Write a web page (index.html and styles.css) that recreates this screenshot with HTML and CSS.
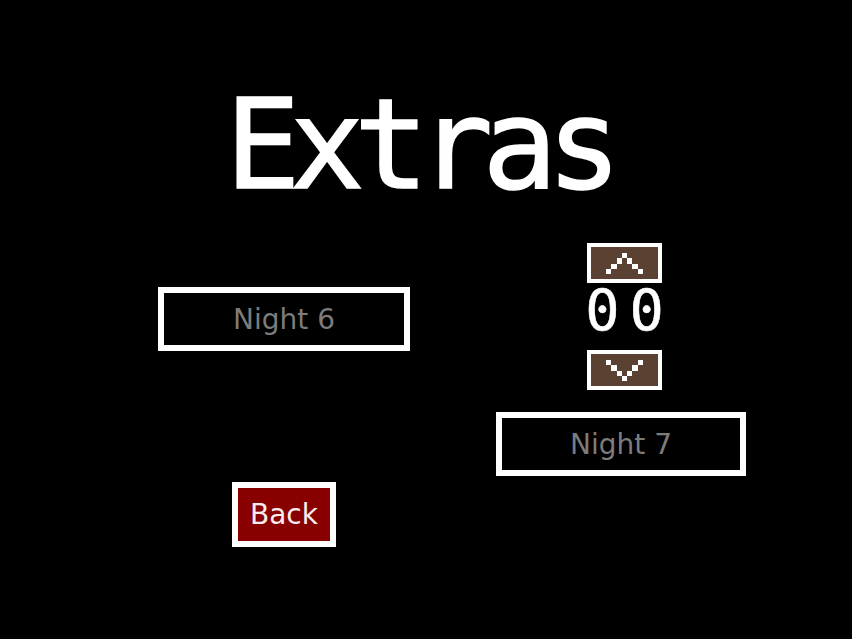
FILE: index.html
```html
<html>
<head>
  <meta charset="UTF-8">
  <meta name="viewport" content="width=device-width, initial-scale=1">
  <title>Extras</title>
  <link rel="stylesheet" href="styles.css">
</head>
<body>
  <div class="screen">
    <h1 class="title">Extras</h1>

    <div class="panel">
      <!-- left side: night 6 + back -->
      <div class="col col-left">
        <button class="night">Night 6</button>
        <button class="back">Back</button>
      </div>

      <!-- right side: custom night counter + night 7 -->
      <div class="col col-right">
        <div class="counter">
          <button class="arrow">
            <svg width="37" height="21" viewBox="0 0 7 4" shape-rendering="crispEdges">
              <rect x="3" y="0" width="1" height="1" fill="#fff"/>
              <rect x="2" y="1" width="1" height="1" fill="#fff"/>
              <rect x="4" y="1" width="1" height="1" fill="#fff"/>
              <rect x="1" y="2" width="1" height="1" fill="#fff"/>
              <rect x="5" y="2" width="1" height="1" fill="#fff"/>
              <rect x="0" y="3" width="1" height="1" fill="#fff"/>
              <rect x="6" y="3" width="1" height="1" fill="#fff"/>
            </svg>
          </button>
          <div class="digits">00</div>
          <button class="arrow">
            <svg width="37" height="21" viewBox="0 0 7 4" shape-rendering="crispEdges">
              <rect x="0" y="0" width="1" height="1" fill="#fff"/>
              <rect x="6" y="0" width="1" height="1" fill="#fff"/>
              <rect x="1" y="1" width="1" height="1" fill="#fff"/>
              <rect x="5" y="1" width="1" height="1" fill="#fff"/>
              <rect x="2" y="2" width="1" height="1" fill="#fff"/>
              <rect x="4" y="2" width="1" height="1" fill="#fff"/>
              <rect x="3" y="3" width="1" height="1" fill="#fff"/>
            </svg>
          </button>
        </div>
        <button class="night">Night 7</button>
      </div>
    </div>
  </div>
</body>
</html>
```

FILE: styles.css
```css
body {
  margin: 0;
  padding: 0;
  background: #000;
}

.screen {
  width: 852px;
  height: 639px;
  background: #000;
  overflow: hidden;
}

.title {
  margin: 0;
  padding-top: 82px;
  padding-right: 16px;
  font-family: "DejaVu Sans Mono", monospace;
  font-weight: normal;
  font-size: 125px;
  line-height: 125px;
  letter-spacing: -11px;
  color: #fff;
  -webkit-text-stroke: 1.5px #fff;
  text-align: center;
}

.panel {
  display: flex;
  align-items: flex-start;
  gap: 86px;
  margin-top: 36px;
  padding-left: 158px;
}

.col {
  display: flex;
  flex-direction: column;
  align-items: center;
}

.col-left {
  width: 252px;
  padding-top: 44px;
  gap: 131px;
}

.col-right {
  width: 250px;
  gap: 22px;
}

button {
  margin: 0;
  padding: 0;
  box-sizing: border-box;
  cursor: pointer;
}

.night {
  width: 100%;
  height: 64px;
  border: 6px solid #fff;
  background: #000;
  color: #7c7c7c;
  font-family: "DejaVu Sans", sans-serif;
  font-size: 28px;
}

.back {
  width: 104px;
  height: 65px;
  border: 6px solid #fff;
  background: #880000;
  color: #f6ecec;
  font-family: "DejaVu Sans", sans-serif;
  font-size: 28px;
}

.counter {
  display: flex;
  flex-direction: column;
  align-items: center;
  padding-left: 7px;
}

.arrow {
  width: 75px;
  height: 40px;
  border: 4px solid #fff;
  background: #5b4131;
  display: flex;
  align-items: center;
  justify-content: center;
}

.digits {
  height: 57px;
  margin-bottom: 10px;
  padding-left: 10px;
  font-family: "DejaVu Sans Mono", monospace;
  font-size: 57px;
  line-height: 57px;
  letter-spacing: 10px;
  color: #fff;
  -webkit-text-stroke: 0.5px #fff;
}
```
